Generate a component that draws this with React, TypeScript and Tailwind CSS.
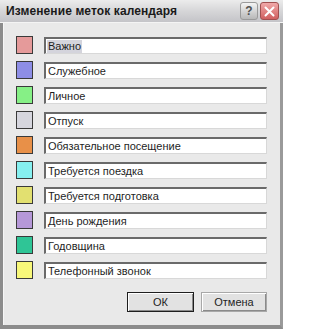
import React from "react";

const rows: { label: string; color: string }[] = [
  { label: "Важно", color: "#e59a9a" },
  { label: "Служебное", color: "#8e8ee6" },
  { label: "Личное", color: "#86f086" },
  { label: "Отпуск", color: "#d6d6de" },
  { label: "Обязательное посещение", color: "#e89048" },
  { label: "Требуется поездка", color: "#86f0f0" },
  { label: "Требуется подготовка", color: "#e2e070" },
  { label: "День рождения", color: "#b698d8" },
  { label: "Годовщина", color: "#2fc596" },
  { label: "Телефонный звонок", color: "#f8f87a" },
];

export default function App() {
  return (
    <div
      className="w-[283px] h-[329px] flex flex-col bg-[#e9e9e9] overflow-hidden"
      style={{ fontFamily: '"Liberation Sans", Arial, sans-serif' }}
    >
      {/* Title bar */}
      <div className="h-[23px] flex items-center pl-[6px] pr-[4px] bg-gradient-to-b from-[#ececec] via-[#d6d6d8] to-[#c4c4c8] border-b border-[#f4f4f4]">
        <div className="flex-1 text-[12px] font-bold text-[#1a1a1a] tracking-[0.1px]">
          Изменение меток календаря
        </div>
        <div className="flex gap-[2px]">
          <div className="w-[18px] h-[18px] rounded-[3px] border border-[#9a9a9a] bg-gradient-to-b from-[#f4f4f4] to-[#b8b8b8] flex items-center justify-center text-[12px] font-bold text-[#505050]">
            ?
          </div>
          <div className="w-[19px] h-[18px] rounded-[3px] border border-[#a05050] bg-gradient-to-b from-[#f0a8a8] to-[#d06060] flex items-center justify-center">
            <svg width="11" height="11" viewBox="0 0 11 11">
              <path d="M1.5 1.5 L9.5 9.5 M9.5 1.5 L1.5 9.5" stroke="#ffffff" strokeWidth="2" strokeLinecap="round" />
            </svg>
          </div>
        </div>
      </div>
      {/* Body with frame */}
      <div className="flex-1 flex flex-col border-l-[3px] border-r-[3px] border-b-[4px] border-l-[#8c8c8c] border-r-[#9a9a9a] border-b-[#8c8c8c]">
        <div className="flex-1 flex flex-col pt-[13px] pl-[12px] pr-[13px] border-l border-[#f6f6f6]">
          <div className="flex flex-col gap-[7px]">
            {rows.map((r, i) => (
              <div key={i} className="flex items-start gap-[11px] h-[18px]">
                <div
                  className="w-[17px] h-[18px] border border-[#3a3a3a] shrink-0"
                  style={{ backgroundColor: r.color }}
                />
                <div className="flex-1 h-[17px] mt-[1px] bg-white border-t-2 border-l-2 border-t-[#6a6a6a] border-l-[#6a6a6a] border-r border-b border-r-[#d8d8d8] border-b-[#d8d8d8] flex items-center pl-[1px]">
                  <span
                    className={
                      "text-[11px] leading-[13px] text-[#1e1e1e] px-[1px] " +
                      (i === 0 ? "bg-[#d4d4dc]" : "")
                    }
                  >
                    {r.label}
                  </span>
                </div>
              </div>
            ))}
          </div>
          <div className="flex justify-end gap-[7px] mt-[13px]">
            <div className="w-[67px] h-[20px] border border-[#1e1e1e] bg-[#e2e2e2] flex items-center justify-center text-[11px] text-[#1e1e1e] shadow-[inset_1px_1px_0_#ffffff,inset_-1px_-1px_0_#8a8a8a]">
              ОК
            </div>
            <div className="w-[66px] h-[20px] border border-[#a8a8a8] bg-[#e2e2e2] flex items-center justify-center text-[11px] text-[#1e1e1e] shadow-[inset_1px_1px_0_#ffffff,inset_-1px_-1px_0_#8a8a8a]">
              Отмена
            </div>
          </div>
        </div>
      </div>
    </div>
  );
}
